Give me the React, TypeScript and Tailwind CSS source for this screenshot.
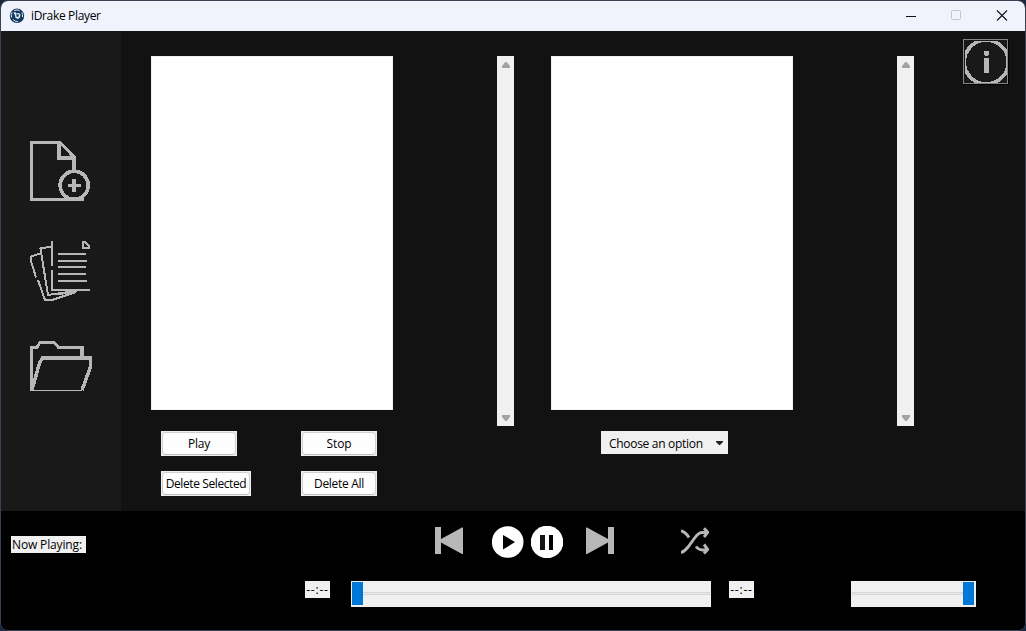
import React from "react";

function AppIcon() {
  return (
    <svg width="16" height="16" viewBox="0 0 16 16" className="shrink-0">
      <circle cx="8" cy="7.800" r="7.200" fill="#17395f" />
      <path d="M3 4.200Q1.800 6.500 2.500 9.500M5.200 2.600Q8 1.200 10.500 2.500M12.800 4.500Q14 6.500 13.500 9M4 11.500Q6 13.700 9 13.600" fill="none" stroke="#dce8f4" strokeWidth="1" />
      <path d="M4.500 4.500 6 4 7.500 5.500 10 5 11.500 6.500 11 9.500 9 11 6.500 10 6 7.500Z" fill="#dce8f4" />
      <path d="M7.300 6.300 10 6.500 9.300 9 7.500 8.500Z" fill="#17395f" />
    </svg>
  );
}

function TitleBar() {
  return (
    <header className="flex h-[30px] shrink-0 items-center bg-[#f0f3fb] pl-2">
      <AppIcon />
      <span className="ml-1.5 text-[12px] leading-4 tracking-[-0.34px]">iDrake Player</span>
      <svg className="ml-auto mr-[16px]" width="103" height="12" viewBox="0 0 103 12" fill="none">
        <path d="M0 6.500H10" stroke="#111" />
        <rect x="45.500" y=".5" width="9" height="9" rx="1" stroke="#c4c6cd" />
        <path d="M91 .5 101 10.500M101 .5 91 10.500" stroke="#111" strokeWidth="1.100" />
      </svg>
    </header>
  );
}

function Sidebar() {
  return (
    <nav className="flex w-[120px] shrink-0 flex-col bg-[#191919] pl-[29px] pt-[110px]">
      <svg width="62" height="60" viewBox="0 0 62 60" fill="none" stroke="#b7b7b7" strokeWidth="3" shapeRendering="crispEdges">
        <path d="M54 58.500H1.500V1.500H30L44.500 16.500" />
        <path d="M44 15V29M29 1V16.500H46" strokeWidth="4" />
        <circle cx="44.200" cy="44.300" r="14" strokeWidth="3.700" />
        <path d="M38 44.500H51" strokeWidth="3" />
        <path d="M44 38V51" strokeWidth="4" />
      </svg>
      <svg className="mt-[39px]" width="62" height="62" viewBox="0 0 62 62" fill="none" stroke="#b7b7b7" strokeWidth="2" shapeRendering="crispEdges">
        <path d="M22 1V26M22 30V50H60M28 14H56M28 21H57M28 27H56M28 34H56M28 41H57" />
        <path d="M53 2V8H59V6L55.500 2Z" strokeWidth="2" />
        <path d="M22 6.500 10.500 8.500 11.500 15 18 55 45 51M10.500 13.500 1 16.500V21L6 37.500M8 40 15 60H22L46 52" strokeWidth="2" />
        <path d="M28 54 47 51" strokeWidth="2.500" />
      </svg>
      <svg className="mt-[38px]" width="63" height="52" viewBox="0 0 63 52" fill="none" stroke="#b7b7b7" strokeWidth="3" shapeRendering="crispEdges">
        <path d="M1.500 51V7.500H7L10 2.300H24L28.500 7.500H52V17" />
        <path d="M51.800 6V17M12 18H62" strokeWidth="4" />
        <path d="M2 50 9.500 23 12.500 18H60.500V27L52 50" strokeWidth="3.500" />
        <path d="M0 50.500H52" strokeWidth="1" />
      </svg>
    </nav>
  );
}

function ListPane() {
  return (
    <div className="flex h-[370px] w-[363px] shrink-0 justify-between">
      <div className="h-[354px] w-[242px] border border-[#f0f0f0] bg-white" />
      <div className="flex w-[17px] flex-col items-center justify-between bg-[#f0f0f0] pb-[5px] pl-px pt-1.5">
        <svg width="8" height="6" viewBox="0 0 8 6"><path d="M3.300 0H4.700L8 4V6H0V4Z" fill="#a3a3a3" /></svg>
        <svg width="8" height="6" viewBox="0 0 8 6"><path d="M3.300 6H4.700L8 2V0H0V2Z" fill="#a3a3a3" /></svg>
      </div>
    </div>
  );
}

function PushButton({ label, size }: { label: string; size: string }) {
  return (
    <button className={`flex h-[25px] bg-[#f0f0f0] p-px text-[12px] ${size}`}>
      <span className="flex h-full w-full items-center justify-center whitespace-nowrap rounded-[4px] border border-[#d0d0d0] border-b-[#bcbcbc] bg-[#fdfdfd] leading-4">
        {label}
      </span>
    </button>
  );
}

function InfoButton() {
  return (
    <button className="ml-[49px] mt-2 h-[46px] w-[46px] shrink-0 self-start">
      <svg width="46" height="46" viewBox="0 0 46 46" fill="none" shapeRendering="crispEdges">
        <rect width="46" height="46" fill="#000" />
        <rect x=".5" y=".5" width="44" height="44" fill="#191919" stroke="#858585" />
        <svg x="2" y="2" width="42" height="42" viewBox="2 2 42 42">
          <circle cx="23.300" cy="23" r="22" stroke="#b7b7b7" strokeWidth="3.600" />
        </svg>
        <circle cx="23.500" cy="14.300" r="2.600" fill="#b7b7b7" />
        <rect x="21" y="19" width="5" height="15" rx="1.500" fill="#b7b7b7" />
      </svg>
    </button>
  );
}

function Library() {
  return (
    <main className="flex flex-1 bg-[#121212] pl-[30px]">
      <section className="w-[400px] shrink-0 pt-[25px]">
        <ListPane />
        <div className="ml-[10px] mt-[5px] grid grid-cols-[140px_76px] gap-y-[15px]">
          <PushButton label="Play" size="w-[76px] tracking-[-0.2px]" />
          <PushButton label="Stop" size="w-[76px] tracking-[-0.1px]" />
          <PushButton label="Delete Selected" size="w-[90px] tracking-[-0.4px]" />
          <PushButton label="Delete All" size="w-[76px] tracking-[-0.3px]" />
        </div>
      </section>
      <section className="w-[363px] shrink-0 pt-[25px]">
        <ListPane />
        <button className="ml-[50px] mt-[5px] flex h-[23px] w-[127px] items-center justify-between bg-[#f0f0f0] pl-2 pr-[5px] text-[12px] leading-4 tracking-[-0.3px]">
          <span className="whitespace-nowrap pt-0.5">Choose an option</span>
          <svg width="7" height="4" viewBox="0 0 7 4"><path d="M0 0H7V1L4 4H3L0 1Z" fill="#222" /></svg>
        </button>
      </section>
      <InfoButton />
    </main>
  );
}

function Transport() {
  return (
    <div className="flex items-start">
      <button className="mt-px">
        <svg width="28" height="27" viewBox="0 0 28 27" fill="#b7b7b7"><path d="M0 0H6V12L27 .5H28V27H27L6 15.500V27H0Z" /></svg>
      </button>
      <button className="ml-[29px]">
        <svg width="32" height="32" viewBox="0 0 32 32"><circle cx="15.700" cy="16" r="15.800" fill="#fff" /><path d="M11 9 23 16 11 23.500Z" fill="#000" /></svg>
      </button>
      <button className="ml-[7px]">
        <svg width="32" height="32" viewBox="0 0 32 32"><circle cx="16" cy="16" r="16.300" fill="#fff" /><path d="M9 9H14V24H9Z" fill="#151515" /><path d="M18 9H22V24H18Z" fill="#000" /></svg>
      </button>
      <button className="ml-[23px] mt-px">
        <svg width="28" height="27" viewBox="0 0 28 27" fill="#b7b7b7"><path d="M28 0H22V12L1 .5H0V27H1L22 15.500V27H28Z" /></svg>
      </button>
      <button className="ml-[67px] mt-px">
        <svg width="28" height="28" viewBox="0 0 28 28" fill="none" stroke="#b7b7b7" strokeWidth="2.900">
          <path d="M0 25.500Q3.500 24.500 7 20L14 10.500Q17.500 5.500 21.500 5.500H26.500M23 1.200 26.800 5.300 23 10" />
          <path d="M0 4Q4 4.500 8 10.500M15 19.500Q17.500 23 21.500 23H26.500M23 17.500 26.800 22.500 23 26.500" />
        </svg>
      </button>
    </div>
  );
}

function TimeLabel() {
  return (
    <span className="flex h-[17px] w-[25px] items-center justify-center bg-[#f0f0f0] text-[12px] leading-4 tracking-[0.8px]">
      --:--
    </span>
  );
}

function Slider({ size, end }: { size: string; end?: boolean }) {
  return (
    <div className={`flex h-[26px] items-center bg-[#f0f0f0] px-px ${size}`}>
      {!end && <span className="mb-px h-[23px] w-[11px] shrink-0 bg-[#0078d7]" />}
      <span className={`mb-[1px] h-[3px] flex-1 border border-[#d6d6d6] bg-[#e7eaea] ${end ? "" : "border-l-0"}`} />
      {end && (
        <>
          <span className="mb-px h-[23px] w-[11px] shrink-0 bg-[#0078d7]" />
          <span className="w-px" />
        </>
      )}
    </div>
  );
}

function PlayerBar() {
  return (
    <footer className="flex flex-1 flex-col bg-black">
      <div className="flex h-[70px] items-start pl-[10px] pt-[15px]">
        <div className="mt-[10px] h-[17px] w-[75px] whitespace-nowrap bg-[#f0f0f0] pl-px text-[12px] leading-[17px] tracking-[-0.14px]">Now Playing:</div>
        <div className="ml-[349px]"><Transport /></div>
      </div>
      <div className="flex items-start pl-[304px]">
        <TimeLabel />
        <Slider size="ml-[21px] w-[360px]" />
        <div className="ml-[18px]"><TimeLabel /></div>
        <Slider size="ml-[97px] w-[125px]" end />
      </div>
    </footer>
  );
}

export default function App() {
  return (
    <div className="h-[631px] w-[1026px] overflow-hidden bg-[#182840] font-['Open_Sans','Noto_Sans',sans-serif] text-black">
      <div className="flex h-full w-full flex-col overflow-hidden rounded-[8px] border border-[#3d4154] bg-black">
        <TitleBar />
        <div className="flex h-[480px] shrink-0">
          <Sidebar />
          <Library />
        </div>
        <PlayerBar />
      </div>
    </div>
  );
}
